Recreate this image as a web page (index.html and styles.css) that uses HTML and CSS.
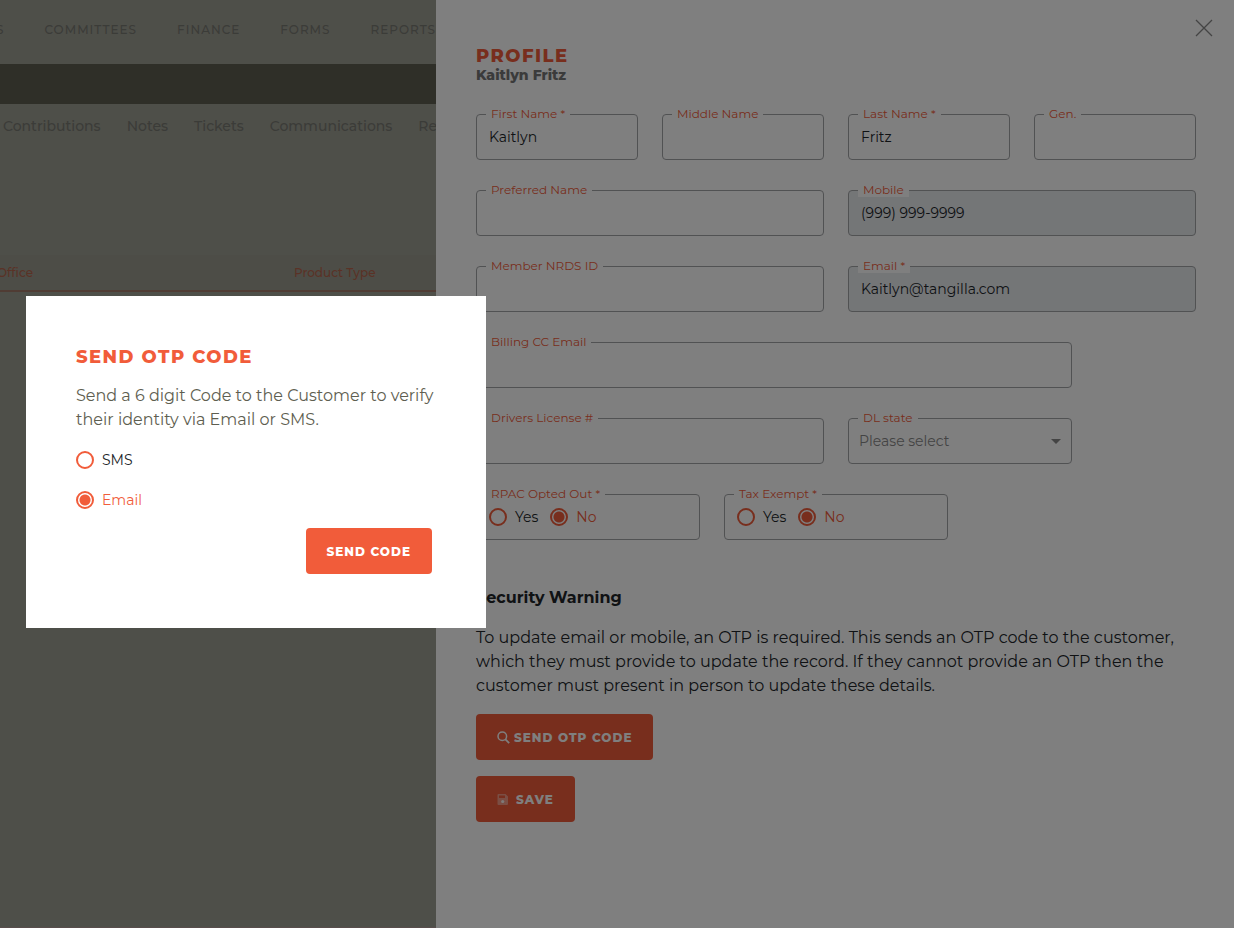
FILE: index.html
```html
<!DOCTYPE html>
<html lang="en">

<head>
  <title>Profile</title>
  <meta charset="utf-8">
  <meta name="viewport" content="width=device-width, initial-scale=1">
  <link rel="stylesheet" href="styles.css">
</head>

<body>
  <!-- Page behind the drawer -->
  <div class="page">
    <nav class="main-nav">
      <a href="#">S</a>
      <a href="#">Committees</a>
      <a href="#">Finance</a>
      <a href="#">Forms</a>
      <a href="#">Reports</a>
    </nav>
    <div class="title-bar"></div>
    <nav class="tabs">
      <a href="#">Contributions</a>
      <a href="#">Notes</a>
      <a href="#">Tickets</a>
      <a href="#">Communications</a>
      <a href="#">Re</a>
    </nav>
    <table class="product-table">
      <thead>
        <tr>
          <th class="office-col">Office</th>
          <th>Product Type</th>
        </tr>
      </thead>
    </table>
  </div>

  <!-- Profile drawer -->
  <section class="drawer">
    <button class="close-btn" aria-label="Close">
      <svg width="24" height="24" viewBox="0 0 24 24" fill="none" stroke="currentColor" stroke-width="1.3">
        <path d="M4 4l16 16M20 4L4 20" />
      </svg>
    </button>
    <h1>Profile</h1>
    <p class="customer-name">Kaitlyn Fritz</p>

    <form class="profile-form">
      <div class="field span-3">
        <label for="firstName">First Name *</label>
        <input type="text" id="firstName" value="Kaitlyn">
      </div>
      <div class="field span-3">
        <label for="middleName">Middle Name</label>
        <input type="text" id="middleName">
      </div>
      <div class="field span-3">
        <label for="lastName">Last Name *</label>
        <input type="text" id="lastName" value="Fritz">
      </div>
      <div class="field span-3">
        <label for="gen">Gen.</label>
        <input type="text" id="gen">
      </div>
      <div class="field span-6">
        <label for="preferredName">Preferred Name</label>
        <input type="text" id="preferredName">
      </div>
      <div class="field span-6">
        <label for="mobile">Mobile</label>
        <input type="text" id="mobile" value="(999) 999-9999" readonly>
      </div>
      <div class="field span-6">
        <label for="nrdsId">Member NRDS ID</label>
        <input type="text" id="nrdsId">
      </div>
      <div class="field span-6">
        <label for="email">Email *</label>
        <input type="text" id="email" value="Kaitlyn@tangilla.com" readonly>
      </div>
      <div class="field span-10">
        <label for="billingEmail">Billing CC Email</label>
        <input type="text" id="billingEmail">
      </div>
      <div class="field span-6 new-row">
        <label for="license">Drivers License #</label>
        <input type="text" id="license">
      </div>
      <div class="field span-4">
        <label for="dlState">DL state</label>
        <select id="dlState">
          <option>Please select</option>
        </select>
        <span class="caret"></span>
      </div>
      <div class="field span-4 new-row" role="radiogroup" aria-labelledby="rpacLabel">
        <span class="field-label" id="rpacLabel">RPAC Opted Out *</span>
        <div class="radio-box">
          <label class="radio"><input type="radio" name="rpac"><span>Yes</span></label>
          <label class="radio"><input type="radio" name="rpac" checked><span>No</span></label>
        </div>
      </div>
      <div class="field span-4" role="radiogroup" aria-labelledby="taxLabel">
        <span class="field-label" id="taxLabel">Tax Exempt *</span>
        <div class="radio-box">
          <label class="radio"><input type="radio" name="tax"><span>Yes</span></label>
          <label class="radio"><input type="radio" name="tax" checked><span>No</span></label>
        </div>
      </div>
    </form>

    <h3>Security Warning</h3>
    <p class="warning">To update email or mobile, an OTP is required. This sends an OTP code to the customer,
      which they must provide to update the record. If they cannot provide an OTP then the
      customer must present in person to update these details.</p>

    <div class="actions">
      <button class="btn">
        <svg width="13" height="13" viewBox="0 0 13 13" fill="none" stroke="currentColor" stroke-width="1.5">
          <circle cx="5.300" cy="5.300" r="4.300" />
          <path d="M8.400 8.400l3.800 3.800" stroke-width="1.800" />
        </svg>
        Send OTP Code
      </button>
      <button class="btn btn-save">
        <svg width="13" height="13" viewBox="0 0 13 13">
          <path fill="currentColor" fill-rule="evenodd" opacity=".4" d="M1.500 1h7L11 3.500V11a1 1 0 0 1-1 1H1.500a1 1 0 0 1-1-1V2a1 1 0 0 1 1-1zM2 2.500V5h6V2.500z" />
          <circle cx="5.700" cy="8.500" r="1.600" fill="currentColor" opacity=".9" />
        </svg>
        Save
      </button>
    </div>
  </section>

  <!-- Send OTP dialog -->
  <div class="overlay">
    <form class="modal" role="dialog" aria-labelledby="otpTitle">
      <h2 id="otpTitle">Send OTP Code</h2>
      <p>Send a 6 digit Code to the Customer to verify their identity via Email or SMS.</p>
      <div class="otp-options">
        <label class="radio"><input type="radio" name="otp"><span>SMS</span></label>
        <label class="radio"><input type="radio" name="otp" checked><span>Email</span></label>
      </div>
      <button type="button" class="btn">Send Code</button>
    </form>
  </div>
</body>

</html>
```

FILE: styles.css
```css
:root {
  --accent-color: #f15c3a;
  --text-color: #212529;
  --olive-color: #5e5e50;
  --page-color: #9d9e93;
  --border-color: #a2a4a6;
}

* {
  box-sizing: border-box;
}

body {
  margin: 0;
  font-family: Montserrat, Inter, sans-serif;
  font-size: 16px;
  line-height: 24px;
  color: var(--text-color);
  background-color: var(--page-color);
}

h1,
h2,
h3,
p {
  margin: 0;
}

h1,
h2 {
  font-size: 18px;
  line-height: 22px;
  font-weight: 800;
  letter-spacing: 0.08em;
  text-transform: uppercase;
  color: var(--accent-color);
}

/* --- Page --- */
.page {
  min-height: 100vh;
  overflow: hidden;
  border-bottom: 1px solid #b09a98;
}

.main-nav,
.tabs {
  display: flex;
  align-items: center;
  white-space: nowrap;
}

.main-nav a,
.tabs a {
  color: #777871;
  text-decoration: none;
}

.main-nav {
  height: 64px;
  gap: 40px;
  margin-left: -4px;
  padding-bottom: 5px;
  font-size: 12px;
  font-weight: 500;
  letter-spacing: 1px;
  text-transform: uppercase;
}

.title-bar {
  height: 40px;
  background-color: var(--olive-color);
}

.tabs {
  height: 44px;
  gap: 26px;
  padding-left: 3px;
  font-size: 14px;
  font-weight: 500;
}

.product-table {
  width: 100%;
  margin-top: 107px;
  border-collapse: collapse;
}

.product-table th {
  height: 36px;
  padding: 0;
  font-size: 12px;
  font-weight: 500;
  text-align: left;
  color: #b5654d;
  background-color: #9b9a8e;
  border-bottom: 2px solid #a17868;
}

.product-table .office-col {
  width: 294px;
  text-indent: -3px;
}

/* --- Drawer --- */
.drawer {
  position: fixed;
  top: 0;
  bottom: 0;
  left: 436px;
  right: 0;
  padding: 45px 38px 0 40px;
  background-color: #fff;
}

.close-btn {
  position: absolute;
  top: 16px;
  right: 18px;
  display: flex;
  padding: 0;
  border: none;
  background: none;
  color: #888;
  cursor: pointer;
}

.customer-name {
  font-size: 14px;
  line-height: 16px;
  font-weight: 800;
  color: #777;
}

.profile-form {
  display: grid;
  grid-template-columns: repeat(12, 1fr);
  gap: 30px 24px;
  margin: 31px 0 46px;
}

.span-3 {
  grid-column-end: span 3;
}

.span-4 {
  grid-column-end: span 4;
}

.span-6 {
  grid-column-end: span 6;
}

.span-10 {
  grid-column-end: span 10;
}

.new-row {
  grid-column-start: 1;
}

.field {
  position: relative;
}

.field > label,
.field-label {
  position: absolute;
  top: -8px;
  left: 10px;
  padding: 0 5px;
  font-size: 12px;
  line-height: 15px;
  color: var(--accent-color);
  background-color: #fff;
}

.field input[type="text"],
.field select,
.radio-box {
  display: block;
  width: 100%;
  height: 46px;
  padding: 0 12px;
  font-family: inherit;
  font-size: 14px;
  color: var(--text-color);
  background-color: #fff;
  border: 1px solid var(--border-color);
  border-radius: 4px;
}

.field input[readonly] {
  background-color: #e9ecef;
}

.field select {
  appearance: none;
  padding: 0 10px;
  color: #888;
}

.caret {
  position: absolute;
  top: 21px;
  right: 11px;
  border: 5px solid transparent;
  border-top-color: #888;
  border-bottom: none;
  pointer-events: none;
}

.field .radio-box {
  display: flex;
  align-items: center;
  gap: 12px;
}

.radio {
  display: flex;
  align-items: center;
  gap: 8px;
  font-size: 14px;
  line-height: 20px;
}

.radio input {
  appearance: none;
  width: 18px;
  height: 18px;
  margin: 0;
  padding: 2px;
  border: 2px solid var(--accent-color);
  border-radius: 50%;
}

.radio input:checked {
  background: radial-gradient(circle, var(--accent-color) 5px, transparent 6px);
}

.radio input:checked + span {
  color: var(--accent-color);
}

h3 {
  font-size: 16px;
  font-weight: 700;
}

.warning {
  margin: 16px 0;
}

.actions {
  display: flex;
  flex-direction: column;
  align-items: flex-start;
  gap: 16px;
}

.btn {
  display: flex;
  align-items: center;
  gap: 4px;
  height: 46px;
  padding: 0 21px;
  border: none;
  border-radius: 4px;
  font-family: inherit;
  font-size: 12px;
  font-weight: 800;
  letter-spacing: 1px;
  text-transform: uppercase;
  color: #fff;
  background-color: var(--accent-color);
  cursor: pointer;
}

.btn-save {
  gap: 6px;
}

/* --- OTP dialog --- */
.overlay {
  position: fixed;
  inset: 0;
  display: flex;
  align-items: center;
  padding: 0 26px 4px;
  background-color: rgba(0, 0, 0, 0.5);
}

.modal {
  display: flex;
  flex-direction: column;
  width: 460px;
  padding: 50px 50px 54px;
  background-color: #fff;
}

.modal p {
  margin: 16px 0 18px;
  color: var(--olive-color);
}

.otp-options {
  display: flex;
  flex-direction: column;
  gap: 20px;
  margin-bottom: 18px;
}

.modal .btn {
  align-self: flex-end;
  margin-right: 4px;
}
```
